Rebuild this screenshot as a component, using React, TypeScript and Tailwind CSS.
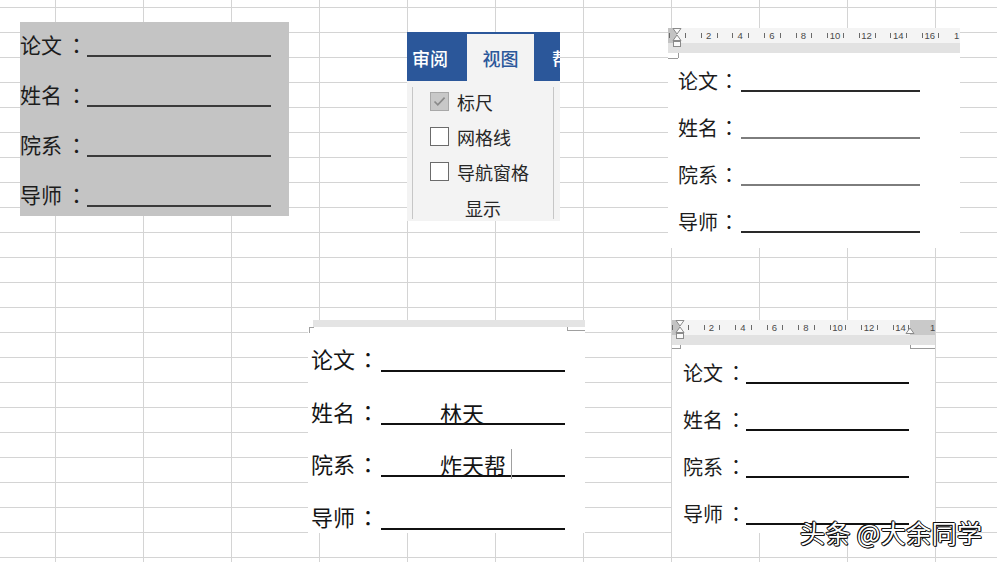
import React from 'react'

const labels = ['论文', '姓名', '院系', '导师']

interface FieldRowProps {
  label: string
  value?: string
  caret?: boolean
  rowCls: string
  textCls: string
  shiftCls?: string
  colonCls: string
  lineCls: string
}

// one "label : ______" line of the form
function FieldRow({ label, value, caret, rowCls, textCls, shiftCls = '', colonCls, lineCls }: FieldRowProps) {
  return (
    <div className={`flex items-end ${rowCls}`}>
      <span className={`font-['Noto_Sans_CJK_SC',sans-serif] leading-none ${textCls} ${shiftCls}`}>{label}</span>
      <span className={`font-['Noto_Sans_CJK_TC',sans-serif] leading-none ${textCls} ${shiftCls} ${colonCls}`}>：</span>
      <div className={`relative flex items-end ${lineCls}`}>
        {value && (
          <span className={`font-['Noto_Sans_CJK_SC',sans-serif] leading-none ${textCls}`}>{value}</span>
        )}
        {caret && <span className="absolute bottom-[-4px] left-[130px] h-[30px] w-px bg-[#a0a0a0]" />}
      </div>
    </div>
  )
}

interface RulerProps {
  width: number
  origin: number
  unit: number
  nums: number[]
  rightEdge?: number
}

function Ruler({ width, origin, unit, nums, rightEdge }: RulerProps) {
  const ticks = [origin - unit / 2, origin + unit / 2]
  nums.forEach((n) => ticks.push(origin + (n - 0.5) * unit, origin + (n + 0.5) * unit))

  return (
    <svg width={width} height={25} className="block">
      <rect width={width} height={15} fill="#f4f4f4" />
      <rect y={15} width={width} height={10} fill="#e2e2e2" />
      <rect width={origin} height={15} fill="#c3c3c3" />
      {rightEdge !== undefined && (
        <rect x={rightEdge} width={width - rightEdge} height={15} fill="#c9c9c9" />
      )}
      {ticks.map((x, i) => (
        <line key={i} x1={Math.round(x) + 0.5} x2={Math.round(x) + 0.5} y1={5} y2={10} stroke="#6a6a6a" />
      ))}
      {nums.map((n) => (
        <text
          key={n}
          x={origin + n * unit}
          y={11}
          fontSize={9.5}
          textAnchor="middle"
          fill="#4a4a4a"
          fontFamily="'Liberation Sans', Arial, sans-serif"
        >
          {n}
        </text>
      ))}
      {/* indent markers */}
      <path d={`M${origin - 4} 0.5 H${origin + 4} L${origin} 6 Z`} fill="#fafafa" stroke="#8a8a8a" />
      <path d={`M${origin} 7 L${origin + 4} 12.5 H${origin - 4} Z`} fill="#fafafa" stroke="#8a8a8a" />
      <rect x={origin - 3.5} y={13.5} width={7} height={5} fill="#fafafa" stroke="#8a8a8a" />
      {rightEdge !== undefined && (
        <path
          d={`M${rightEdge} 8 L${rightEdge + 4} 13.5 H${rightEdge - 4} Z`}
          fill="#fafafa"
          stroke="#8a8a8a"
        />
      )}
    </svg>
  )
}

function Check({ checked }: { checked?: boolean }) {
  if (checked) {
    return (
      <span className="flex h-[19px] w-[19px] shrink-0 items-center justify-center border border-[#a8a8a8] bg-[#c8c8c8]">
        <svg width="15" height="15" viewBox="0 0 15 15">
          <path d="M2.5 7.5l3.3 3.3L12.6 3.6" fill="none" stroke="#8a8a8a" strokeWidth="1.7" />
        </svg>
      </span>
    )
  }
  return <span className="h-[19px] w-[19px] shrink-0 border border-[#6b6b6b] bg-white" />
}

const p3Lines = [
  'ml-[2px] w-[179px] border-b-2 border-[#2a2a2a]',
  'ml-[2px] w-[179px] border-b-2 border-[#7d7d7d]',
  'ml-[2px] w-[179px] border-b-2 border-[#7d7d7d]',
  'ml-[2px] w-[179px] border-b-2 border-[#2a2a2a]',
]

export default function App() {
  return (
    <div className="relative h-[562px] w-[997px] overflow-hidden bg-white bg-[linear-gradient(to_right,#d4d4d4_1px,transparent_1px),linear-gradient(to_bottom,#d4d4d4_1px,transparent_1px)] [background-position:55px_7px] [background-size:88px_25px] font-['Noto_Sans_CJK_SC',sans-serif]">
      {/* gray form */}
      <div className="absolute left-[20px] top-[22px] flex h-[194px] w-[269px] flex-col gap-[26px] bg-[#c4c4c4] pt-[11px]">
        {labels.map((l) => (
          <FieldRow
            key={l}
            label={l}
            rowCls="h-[24px]"
            textCls="text-[21px] text-[#1c1c1c]"
            shiftCls="mb-[2px]"
            colonCls="ml-[4px]"
            lineCls="w-[184px] border-b-2 border-[#3a3a3a]"
          />
        ))}
      </div>

      {/* ribbon: view tab */}
      <div className="absolute left-[407px] top-[32px] flex h-[189px] w-[153px] flex-col overflow-hidden">
        <div className="flex h-[49px] shrink-0 bg-[#2b579a] text-[18px] leading-none font-medium">
          <div className="flex w-[60px] shrink-0 items-center pl-[5px] pt-[3px] text-white">审阅</div>
          <div className="mt-[2px] flex w-[67px] shrink-0 items-center justify-center bg-[#f3f3f3] pt-[1px] text-[#2b579a]">
            视图
          </div>
          <div className="flex w-[26px] shrink-0 items-center overflow-hidden whitespace-nowrap pl-[18px] pt-[3px] text-white">
            帮
          </div>
        </div>
        <div className="flex-1 bg-[#f3f3f3] pl-[5px] pr-[6px] pt-[6px] pb-[2px]">
          <div className="flex h-full flex-col border-x border-[#c6c6c6] pt-[5px] text-[18px] leading-none text-[#262626]">
            <div className="flex flex-col gap-[16px] pl-[17px]">
              <div className="flex h-[19px] items-center gap-[8px]">
                <Check checked />
                标尺
              </div>
              <div className="flex h-[19px] items-center gap-[8px]">
                <Check />
                网格线
              </div>
              <div className="flex h-[19px] items-center gap-[8px]">
                <Check />
                导航窗格
              </div>
            </div>
            <div className="mt-[18px] text-center">显示</div>
          </div>
        </div>
      </div>

      {/* word page, top right */}
      <div className="absolute left-[668px] top-[28px] h-[220px] w-[292px] overflow-hidden bg-white">
        <Ruler width={292} origin={9} unit={15.8} nums={[2, 4, 6, 8, 10, 12, 14, 16]} />
        <div className="flex flex-col gap-[23px] pl-[10px] pt-[15px]">
          {labels.map((l, i) => (
            <FieldRow
              key={l}
              label={l}
              rowCls="h-[24px]"
              textCls="text-[20px] text-[#1c1c1c]"
              shiftCls="mb-[1px]"
              colonCls="ml-[1px]"
              lineCls={p3Lines[i]}
            />
          ))}
        </div>
        <span className="absolute left-[286px] top-[3px] text-[9.5px] leading-none text-[#4a4a4a] font-['Liberation_Sans',sans-serif]">
          1
        </span>
        <span className="absolute left-0 top-[30px] h-px w-[10px] bg-[#9a9a9a]" />
        <span className="absolute left-[10px] top-[25px] h-[5px] w-px bg-[#9a9a9a]" />
      </div>

      {/* filled-in form, bottom middle */}
      <div className="absolute left-[308px] top-[320px] h-[213px] w-[277px] bg-white">
        <div className="ml-[5px] h-[7px] bg-[#e4e4e4]" />
        <div className="flex flex-col gap-[26.5px] pl-[3px] pt-[19px]">
          <FieldRow
            label="论文"
            rowCls="h-[26px]"
            textCls="text-[22px] text-[#141414]"
            shiftCls="mb-[3px]"
            colonCls="ml-[2px]"
            lineCls="ml-[2px] w-[184px] border-b-2 border-[#111]"
          />
          <FieldRow
            label="姓名"
            value="林天"
            rowCls="h-[26px]"
            textCls="text-[22px] text-[#141414]"
            shiftCls="mb-[3px]"
            colonCls="ml-[2px]"
            lineCls="ml-[2px] w-[184px] border-b-2 border-[#111] pl-[59px]"
          />
          <FieldRow
            label="院系"
            value="炸天帮"
            caret
            rowCls="h-[26px]"
            textCls="text-[22px] text-[#141414]"
            shiftCls="mb-[3px]"
            colonCls="ml-[2px]"
            lineCls="ml-[2px] w-[184px] border-b-2 border-[#111] pl-[59px]"
          />
          <FieldRow
            label="导师"
            rowCls="h-[26px]"
            textCls="text-[22px] text-[#141414]"
            shiftCls="mb-[3px]"
            colonCls="ml-[2px]"
            lineCls="ml-[2px] w-[184px] border-b-2 border-[#111]"
          />
        </div>
        <span className="absolute left-[1px] top-[7px] h-[6px] w-px bg-[#a0a0a0]" />
        <span className="absolute left-[1px] top-[7px] h-px w-[5px] bg-[#a0a0a0]" />
        <span className="absolute left-[259px] top-[7px] h-[4px] w-px bg-[#a0a0a0]" />
        <span className="absolute left-[259px] top-[10px] h-px w-[18px] bg-[#a0a0a0]" />
      </div>

      {/* word page, bottom right */}
      <div className="absolute left-[671px] top-[320px] h-[213px] w-[265px] overflow-hidden border-x border-[#d4d4d4] bg-white">
        <Ruler width={263} origin={8} unit={15.75} nums={[2, 4, 6, 8, 10, 12, 14]} rightEdge={238} />
        <div className="flex flex-col gap-[23px] pl-[11px] pt-[15px]">
          {labels.map((l) => (
            <FieldRow
              key={l}
              label={l}
              rowCls="h-[24px]"
              textCls="text-[20px] text-[#1c1c1c]"
              shiftCls="mb-[1px]"
              colonCls="ml-[3px]"
              lineCls="w-[163px] border-b-2 border-[#111]"
            />
          ))}
        </div>
        <span className="absolute left-[258px] top-[3px] text-[9.5px] leading-none text-[#4a4a4a] font-['Liberation_Sans',sans-serif]">
          1
        </span>
        <span className="absolute left-[8px] top-[25px] h-[3px] w-px bg-[#9a9a9a]" />
        <span className="absolute left-0 top-[28px] h-px w-[9px] bg-[#9a9a9a]" />
        <span className="absolute left-[238px] top-[25px] h-[3px] w-px bg-[#9a9a9a]" />
        <span className="absolute left-[238px] top-[28px] h-px w-[25px] bg-[#9a9a9a]" />
      </div>

      {/* watermark */}
      <div className="absolute left-[800px] top-[520px] whitespace-nowrap text-[25px] leading-none tracking-[0.4px] text-white [text-shadow:1px_0_0_#111,-1px_0_0_#111,0_1px_0_#111,0_-1px_0_#111,1px_1px_0_#111,-1px_-1px_0_#111]">
        头条 @大余同学
      </div>
    </div>
  )
}
